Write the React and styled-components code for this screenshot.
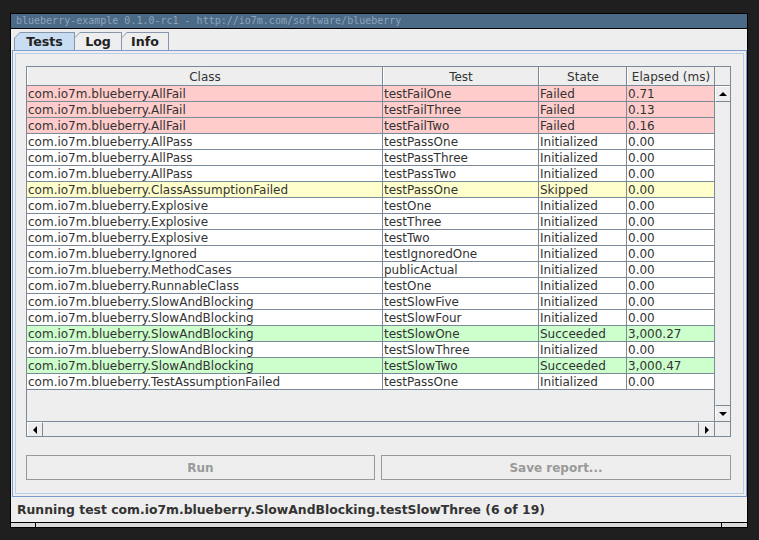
import React from "react";
import styled, { createGlobalStyle, css } from "styled-components";

const GlobalStyle = createGlobalStyle`
  *, *::before, *::after { box-sizing: border-box; }
  html, body { margin: 0; padding: 0; background: #1f1f1f; }
  body { font-family: "DejaVu Sans", "Liberation Sans", sans-serif; color: #333333; }
`;

const GRID = "#7a8a99";

const Screen = styled.div`
  width: 759px;
  height: 540px;
  padding: 13px 0 0 10px;
  background: #1f1f1f;
  overflow: hidden;
`;

const Window = styled.div`
  width: 738px;
  border: 1px solid #000;
  background: #eeeeee;
  display: flex;
  flex-direction: column;
`;

const TitleBar = styled.div`
  height: 15px;
  border-bottom: 1px solid #000;
  background: #4b6a86;
  color: #8ba4ba;
  font-family: "DejaVu Sans Mono", "Liberation Mono", monospace;
  font-size: 10px;
  line-height: 14px;
  padding-left: 5px;
  white-space: nowrap;
`;

const Content = styled.div`
  display: flex;
  flex-direction: column;
`;

const TabStrip = styled.div`
  display: flex;
  padding: 3px 0 0 3px;
  height: 21px;
`;

const TabEdge = styled.div`
  width: ${(p) => p.$w}px;
  height: 18px;
  margin-right: -1px;
  padding: 1px 1px 0 1px;
  background: #8797ab;
  clip-path: polygon(6px 0, 100% 0, 100% 100%, 0 100%, 0 6px);
`;

const TabFace = styled.div`
  height: 17px;
  background: ${(p) => (p.$active ? "#c8ddf2" : "#eeeeee")};
  clip-path: polygon(5px 0, 100% 0, 100% 100%, 0 100%, 0 5px);
  font-size: 12.6px;
  font-weight: bold;
  line-height: 18px;
  text-align: center;
  color: #222;
`;

const Panel = styled.div`
  margin-left: 1px;
  width: 735px;
  height: 447px;
  border: 1px solid #7b9bd1;
  box-shadow: inset 0 0 0 2px #eeeeee, inset 0 0 0 3px #b8cfe5;
  padding: 15px 15px 0 13px;
`;

const ScrollPane = styled.div`
  width: 705px;
  height: 371px;
  border: 1px solid ${GRID};
  display: flex;
  flex-direction: column;
`;

const PaneBody = styled.div`
  display: flex;
  height: 354px;
`;

const Viewport = styled.div`
  width: 687px;
  display: flex;
  flex-direction: column;
  background: #eeeeee;
`;

const cols = "356px 156px 88px 87px";

const HeaderRow = styled.div`
  display: grid;
  grid-template-columns: ${cols};
  height: 19px;
  border-bottom: 1px solid ${GRID};
  background: #eeeeee;
`;

const HeaderCell = styled.div`
  border-left: 1px solid #ffffff;
  border-right: ${(p) => (p.$last ? "none" : `1px solid ${GRID}`)};
  font-size: 12px;
  line-height: 20px;
  text-align: center;
  white-space: nowrap;
  overflow: hidden;
`;

const rowColors = {
  fail: "#ffcccc",
  skip: "#ffffcc",
  pass: "#ccffcc",
  idle: "#ffffff",
};

const Row = styled.div`
  display: grid;
  grid-template-columns: ${cols};
  height: 16px;
  border-bottom: 1px solid ${GRID};
  background: ${(p) => rowColors[p.$kind]};
`;

const Cell = styled.div`
  padding-left: 1px;
  border-right: ${(p) => (p.$last ? "none" : `1px solid ${GRID}`)};
  font-size: 12px;
  line-height: 17px;
  white-space: nowrap;
  overflow: hidden;
`;

const VBar = styled.div`
  width: 16px;
  border-left: 1px solid ${GRID};
  display: flex;
  flex-direction: column;
  background: #eeeeee;
`;

const Corner = styled.div`
  height: 19px;
  border-bottom: 1px solid ${GRID};
`;

const Track = styled.div`
  flex: 1;
`;

const ScrollButton = styled.div`
  width: ${(p) => (p.$horizontal ? "16px" : "auto")};
  height: ${(p) => (p.$horizontal ? "auto" : "16px")};
  display: flex;
  align-items: center;
  justify-content: center;
  background: #eeeeee;
  border-top: 1px solid #ffffff;
  border-left: 1px solid #ffffff;
  ${(p) =>
    p.$edge === "bottom" &&
    css`
      border-bottom: 1px solid ${GRID};
    `}
  ${(p) =>
    p.$edge === "top" &&
    css`
      border-top: 1px solid ${GRID};
    `}
  ${(p) =>
    p.$edge === "right" &&
    css`
      border-right: 1px solid ${GRID};
    `}
  ${(p) =>
    p.$edge === "left" &&
    css`
      border-left: 1px solid ${GRID};
    `}
`;

const Arrow = styled.span`
  width: 0;
  height: 0;
  ${(p) =>
    p.$dir === "up" &&
    css`
      border-left: 4px solid transparent;
      border-right: 4px solid transparent;
      border-bottom: 4px solid #000;
    `}
  ${(p) =>
    p.$dir === "down" &&
    css`
      border-left: 4px solid transparent;
      border-right: 4px solid transparent;
      border-top: 4px solid #000;
    `}
  ${(p) =>
    p.$dir === "left" &&
    css`
      border-top: 4px solid transparent;
      border-bottom: 4px solid transparent;
      border-right: 4px solid #000;
    `}
  ${(p) =>
    p.$dir === "right" &&
    css`
      border-top: 4px solid transparent;
      border-bottom: 4px solid transparent;
      border-left: 4px solid #000;
    `}
`;

const HBar = styled.div`
  height: 15px;
  border-top: 1px solid ${GRID};
  display: flex;
  background: #eeeeee;
`;

const HCorner = styled.div`
  width: 16px;
  border-left: 1px solid ${GRID};
`;

const ButtonRow = styled.div`
  display: flex;
  gap: 6px;
  margin-top: 18px;
`;

const Button = styled.button`
  width: ${(p) => p.$w}px;
  height: 25px;
  margin: 0;
  padding: 0;
  border: 1px solid #999999;
  background: #eeeeee;
  color: #999999;
  font-family: "DejaVu Sans", "Liberation Sans", sans-serif;
  font-size: 12px;
  font-weight: bold;
`;

const StatusBar = styled.div`
  height: 25px;
  padding-left: 6px;
  font-size: 12.4px;
  font-weight: bold;
  line-height: 25px;
  color: #333;
  white-space: nowrap;
`;

const Foot = styled.div`
  display: flex;
  height: 5px;
  border-top: 1px solid #000;
  background: #dadada;
`;

const FootPart = styled.div`
  width: ${(p) => (p.$w ? `${p.$w}px` : "auto")};
  flex: ${(p) => (p.$w ? "none" : 1)};
  border-right: ${(p) => (p.$divider ? "1px solid #000" : "none")};
`;

const tests = [
  ["com.io7m.blueberry.AllFail", "testFailOne", "Failed", "0.71", "fail"],
  ["com.io7m.blueberry.AllFail", "testFailThree", "Failed", "0.13", "fail"],
  ["com.io7m.blueberry.AllFail", "testFailTwo", "Failed", "0.16", "fail"],
  ["com.io7m.blueberry.AllPass", "testPassOne", "Initialized", "0.00", "idle"],
  ["com.io7m.blueberry.AllPass", "testPassThree", "Initialized", "0.00", "idle"],
  ["com.io7m.blueberry.AllPass", "testPassTwo", "Initialized", "0.00", "idle"],
  ["com.io7m.blueberry.ClassAssumptionFailed", "testPassOne", "Skipped", "0.00", "skip"],
  ["com.io7m.blueberry.Explosive", "testOne", "Initialized", "0.00", "idle"],
  ["com.io7m.blueberry.Explosive", "testThree", "Initialized", "0.00", "idle"],
  ["com.io7m.blueberry.Explosive", "testTwo", "Initialized", "0.00", "idle"],
  ["com.io7m.blueberry.Ignored", "testIgnoredOne", "Initialized", "0.00", "idle"],
  ["com.io7m.blueberry.MethodCases", "publicActual", "Initialized", "0.00", "idle"],
  ["com.io7m.blueberry.RunnableClass", "testOne", "Initialized", "0.00", "idle"],
  ["com.io7m.blueberry.SlowAndBlocking", "testSlowFive", "Initialized", "0.00", "idle"],
  ["com.io7m.blueberry.SlowAndBlocking", "testSlowFour", "Initialized", "0.00", "idle"],
  ["com.io7m.blueberry.SlowAndBlocking", "testSlowOne", "Succeeded", "3,000.27", "pass"],
  ["com.io7m.blueberry.SlowAndBlocking", "testSlowThree", "Initialized", "0.00", "idle"],
  ["com.io7m.blueberry.SlowAndBlocking", "testSlowTwo", "Succeeded", "3,000.47", "pass"],
  ["com.io7m.blueberry.TestAssumptionFailed", "testPassOne", "Initialized", "0.00", "idle"],
];

const tabs = [
  { label: "Tests", w: 61, active: true },
  { label: "Log", w: 48 },
  { label: "Info", w: 48 },
];

export default function App() {
  return (
    <Screen>
      <GlobalStyle />
      <Window>
        <TitleBar>blueberry-example 0.1.0-rc1 - http://io7m.com/software/blueberry</TitleBar>
        <Content>
          <TabStrip>
            {tabs.map((t) => (
              <TabEdge key={t.label} $w={t.w}>
                <TabFace $active={t.active}>{t.label}</TabFace>
              </TabEdge>
            ))}
          </TabStrip>
          <Panel>
            <ScrollPane>
              <PaneBody>
                <Viewport>
                  <HeaderRow>
                    <HeaderCell>Class</HeaderCell>
                    <HeaderCell>Test</HeaderCell>
                    <HeaderCell>State</HeaderCell>
                    <HeaderCell $last>Elapsed (ms)</HeaderCell>
                  </HeaderRow>
                  {tests.map(([cls, name, state, time, kind], i) => (
                    <Row key={i} $kind={kind}>
                      <Cell>{cls}</Cell>
                      <Cell>{name}</Cell>
                      <Cell>{state}</Cell>
                      <Cell $last>{time}</Cell>
                    </Row>
                  ))}
                </Viewport>
                <VBar>
                  <Corner />
                  <ScrollButton $edge="bottom">
                    <Arrow $dir="up" />
                  </ScrollButton>
                  <Track />
                  <ScrollButton $edge="top">
                    <Arrow $dir="down" />
                  </ScrollButton>
                </VBar>
              </PaneBody>
              <HBar>
                <ScrollButton $horizontal $edge="right">
                  <Arrow $dir="left" />
                </ScrollButton>
                <Track />
                <ScrollButton $horizontal $edge="left">
                  <Arrow $dir="right" />
                </ScrollButton>
                <HCorner />
              </HBar>
            </ScrollPane>
            <ButtonRow>
              <Button $w={349} disabled>
                Run
              </Button>
              <Button $w={350} disabled>
                Save report...
              </Button>
            </ButtonRow>
          </Panel>
          <StatusBar>Running test com.io7m.blueberry.SlowAndBlocking.testSlowThree (6 of 19)</StatusBar>
        </Content>
        <Foot>
          <FootPart $w={25} $divider />
          <FootPart $divider />
          <FootPart $w={25} />
        </Foot>
      </Window>
    </Screen>
  );
}
